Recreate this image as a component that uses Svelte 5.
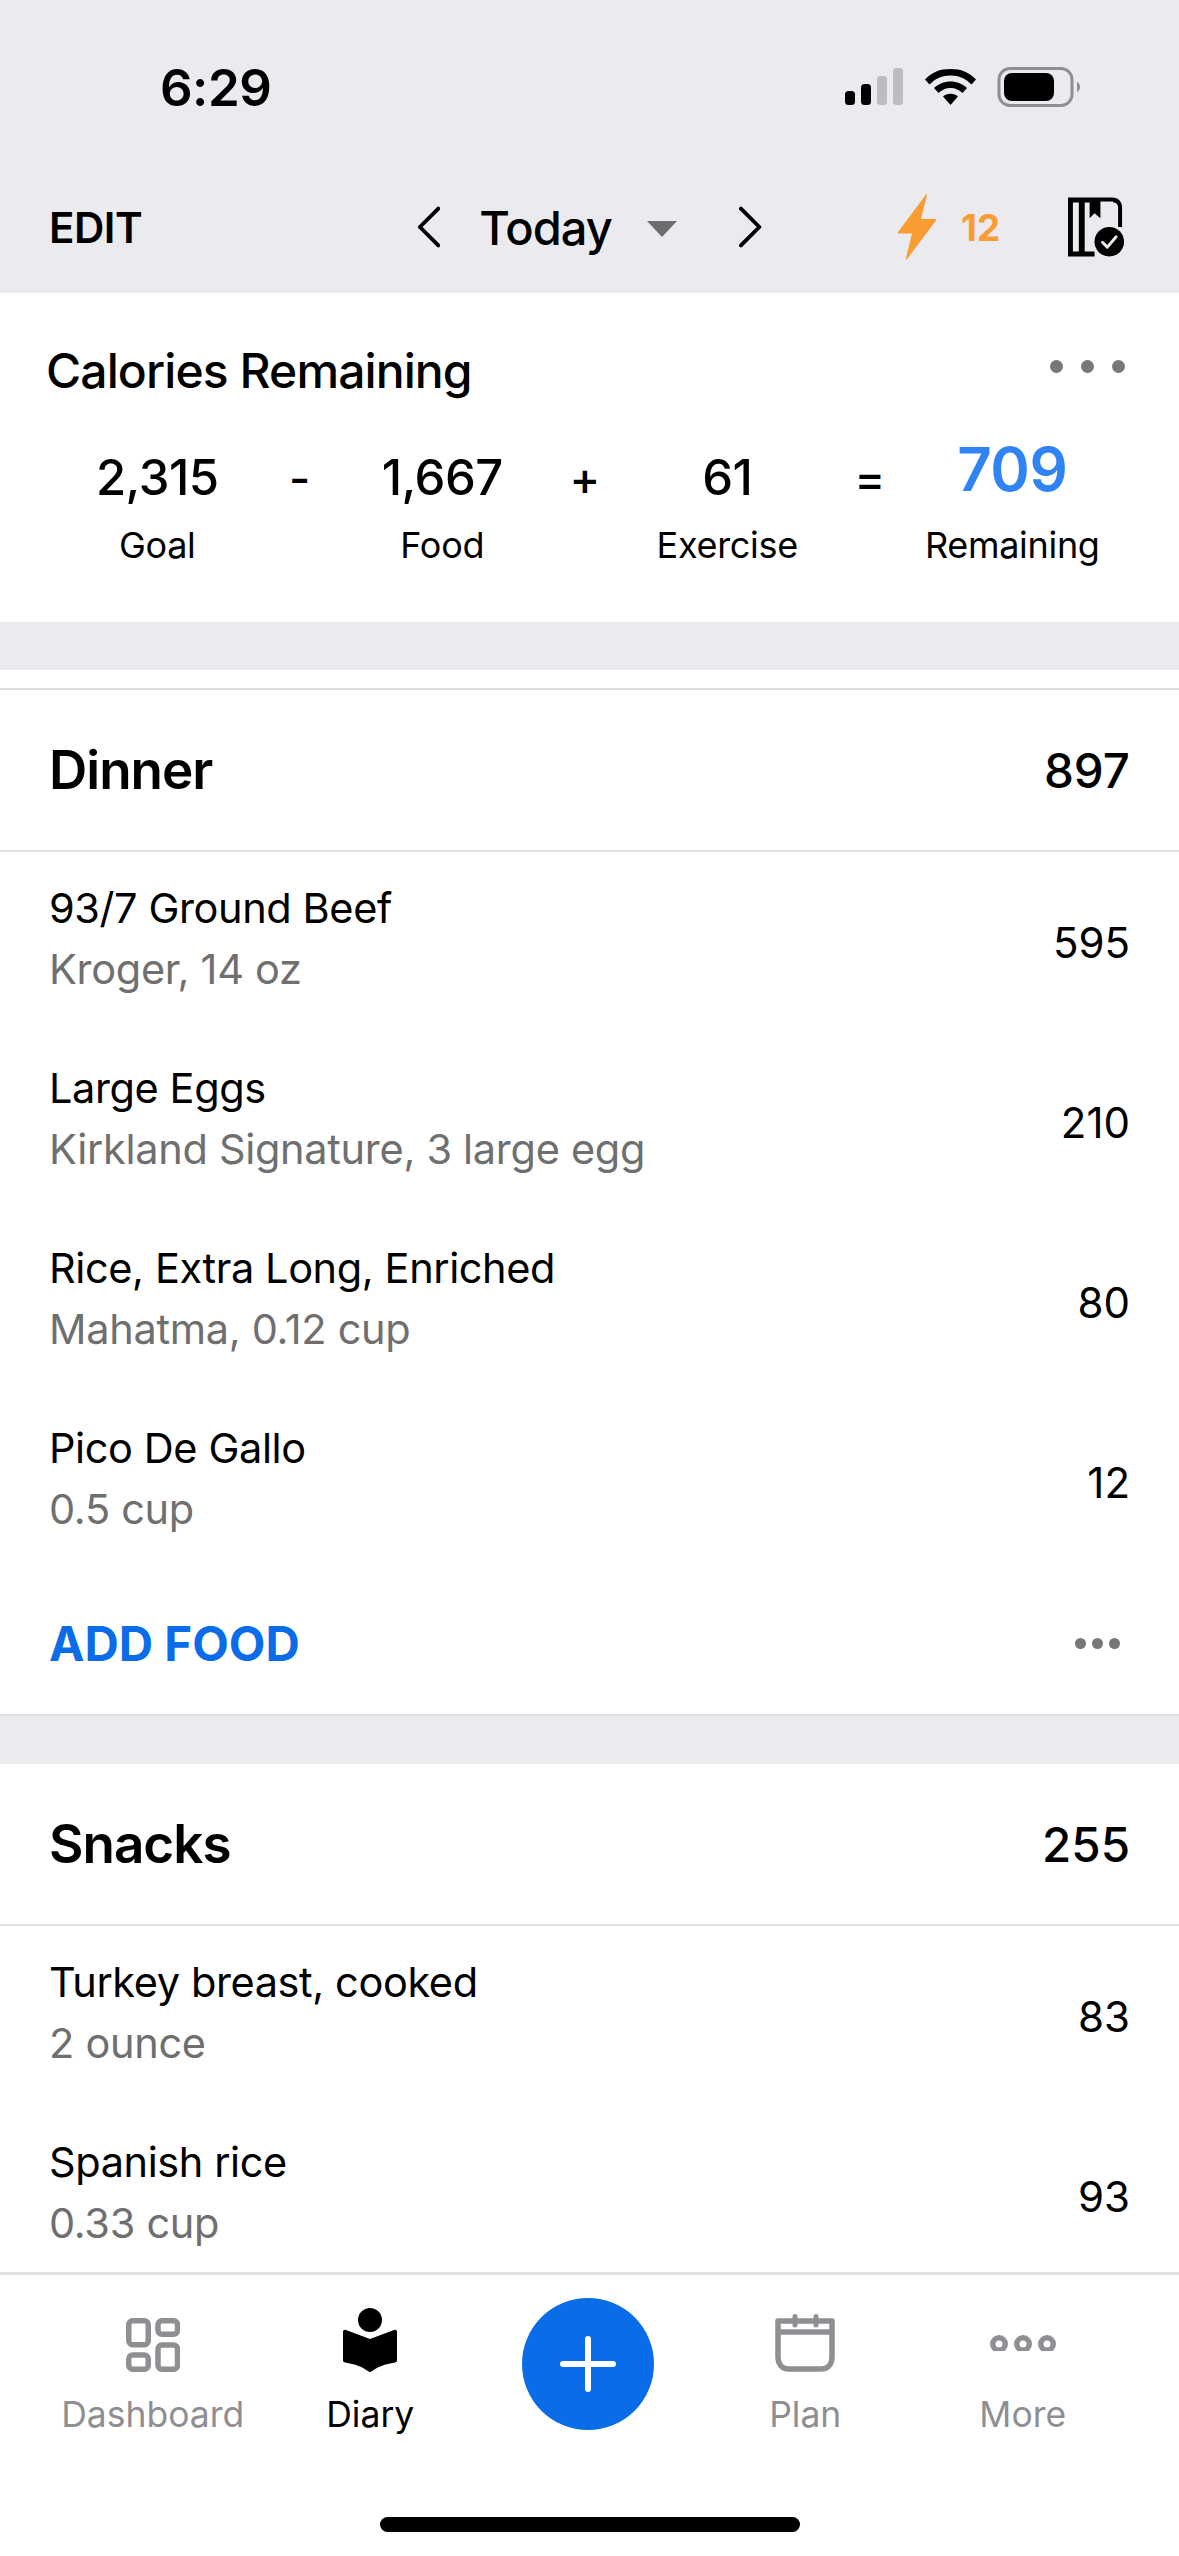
<script lang="ts">
	const stats = [
		{ value: '2,315', label: 'Goal' },
		{ op: '-' },
		{ value: '1,667', label: 'Food' },
		{ op: '+' },
		{ value: '61', label: 'Exercise' },
		{ op: '=' },
		{ value: '709', label: 'Remaining', highlight: true }
	];

	const meals = [
		{
			name: 'Dinner',
			total: 897,
			addFood: true,
			items: [
				{ name: '93/7 Ground Beef', detail: 'Kroger, 14 oz', cal: 595 },
				{ name: 'Large Eggs', detail: 'Kirkland Signature, 3 large egg', cal: 210 },
				{ name: 'Rice, Extra Long, Enriched', detail: 'Mahatma, 0.12 cup', cal: 80 },
				{ name: 'Pico De Gallo', detail: '0.5 cup', cal: 12 }
			]
		},
		{
			name: 'Snacks',
			total: 255,
			addFood: false,
			items: [
				{ name: 'Turkey breast, cooked', detail: '2 ounce', cal: 83 },
				{ name: 'Spanish rice', detail: '0.33 cup', cal: 93 }
			]
		}
	];
</script>

<div class="screen">
	<header class="top">
		<div class="status">
			<span class="time">6:29</span>
			<svg class="status-icons" width="240" height="40" viewBox="0 0 240 40">
				<rect x="0" y="24" width="10" height="14" rx="3.5" fill="#000" />
				<rect x="16" y="17" width="10" height="21" rx="3.5" fill="#000" />
				<rect x="32" y="9" width="10" height="29" rx="3.5" fill="#bcbcc2" />
				<rect x="48" y="1" width="10" height="37" rx="3.5" fill="#bcbcc2" />
				<path
					d="M80 12.5C87 5 95 2 105.5 2S124 5 131 12.5L126.500 17.500C120.500 11.500 114 8.500 105.500 8.500S90.500 11.500 84.500 17.500Z"
					fill="#000"
				/>
				<path
					d="M89 21C93.500 17 99 14.500 105.500 14.500S117.500 17 122 21L117.500 26C114.500 23 110.500 21 105.500 21S96.500 23 93.500 26Z"
					fill="#000"
				/>
				<path d="M98 29.500C100 27.800 102.500 26.800 105.500 26.800S111 27.800 113 29.500L105.500 38Z" fill="#000" />
				<rect x="154" y="1.500" width="73" height="37" rx="11" fill="none" stroke="#8e8e93" stroke-width="3" />
				<rect x="159" y="6" width="50" height="28" rx="8" fill="#000" />
				<path d="M232 15C236 16.500 236 23.500 232 25Z" fill="#8e8e93" />
			</svg>
		</div>
		<nav class="toolbar">
			<span class="edit">EDIT</span>
			<div class="date-nav">
				<svg width="24" height="42" viewBox="0 0 24 42">
					<path d="M22 2L3 21L22 40" fill="none" stroke="#000" stroke-width="4" stroke-linecap="round" stroke-linejoin="round" />
				</svg>
				<span class="today">Today</span>
				<span class="caret"></span>
				<svg width="24" height="42" viewBox="0 0 24 42">
					<path d="M2 2L21 21L2 40" fill="none" stroke="#000" stroke-width="4" stroke-linecap="round" stroke-linejoin="round" />
				</svg>
			</div>
			<div class="streak">
				<svg width="40" height="66" viewBox="0 0 40 66">
					<path
						d="M29 0.500L1 38C0.500 39 1 39.500 2 39.500H15L9 64C8.500 66 9.500 66 10.500 64.500L39 26.500C39.500 25.500 39 25 38 25H24L30 1C30.200 0 29.500 0 29 0.500Z"
						fill="#f99d33"
					/>
				</svg>
				<span class="streak-count">12</span>
			</div>
			<svg class="book" width="58" height="60" viewBox="0 0 58 60">
				<path
					d="M0 0H45C51 0 55 4 55 10V30H51V10C51 7 49 5 46 5V4H33V21L27 16L22 21V5H17V55H27V60H0ZM5 5V55H11V5Z"
					fill="#000"
					fill-rule="evenodd"
				/>
				<circle cx="42" cy="45" r="15" fill="#000" />
				<path d="M35 45.500L40 50.500L49 40" fill="none" stroke="#eaeaef" stroke-width="3" stroke-linecap="round" stroke-linejoin="round" />
			</svg>
		</nav>
	</header>

	<main class="content">
		<section class="summary">
			<div class="summary-head">
				<h2>Calories Remaining</h2>
				<div class="dots"><i></i><i></i><i></i></div>
			</div>
			<div class="stats">
				{#each stats as s}
					{#if s.op}
						<div class="op">{s.op}</div>
					{:else}
						<div class="stat">
							<div class="value" class:highlight={s.highlight}>{s.value}</div>
							<div class="label">{s.label}</div>
						</div>
					{/if}
				{/each}
			</div>
		</section>

		{#each meals as meal, i}
			<section class="meal" class:first={i === 0}>
				<div class="meal-head">
					<h3>{meal.name}</h3>
					<span>{meal.total}</span>
				</div>
				<ul>
					{#each meal.items as item}
						<li>
							<div class="text">
								<div class="food">{item.name}</div>
								<div class="detail">{item.detail}</div>
							</div>
							<span class="cal">{item.cal}</span>
						</li>
					{/each}
				</ul>
				{#if meal.addFood}
					<div class="add-row">
						<span class="add">ADD FOOD</span>
						<div class="small-dots"><i></i><i></i><i></i></div>
					</div>
				{/if}
			</section>
		{/each}
	</main>

	<footer class="tabbar">
		<div class="tabs">
			<div class="tab">
				<svg width="54" height="54" viewBox="0 0 54 54" fill="none" stroke="#8e8e93" stroke-width="5.500">
					<rect x="2.750" y="2.750" width="19.500" height="24" rx="4" />
					<rect x="32" y="2.750" width="19.500" height="13.500" rx="4" />
					<rect x="2.750" y="37" width="19.500" height="14.250" rx="4" />
					<rect x="32" y="27" width="19.500" height="24.250" rx="4" />
				</svg>
				<span>Dashboard</span>
			</div>
			<div class="tab active">
				<svg width="54" height="64" viewBox="0 0 54 64" fill="#000">
					<circle cx="27" cy="12" r="12" />
					<path
						d="M3 22L27 31L51 22C53 21.500 54 22.500 54 24V52C54 53.500 53.500 54 52 54.500C42 56 34 59 28.500 63.500C27.500 64 26.500 64 25.500 63.500C20 59 12 56 2 54.500C0.500 54 0 53.500 0 52V24C0 22.500 1 21.500 3 22Z"
					/>
				</svg>
				<span>Diary</span>
			</div>
			<div class="tab">
				<button class="plus" aria-label="Add">
					<svg width="56" height="56" viewBox="0 0 56 56">
						<path d="M28 3V53M3 28H53" stroke="#fff" stroke-width="6" stroke-linecap="round" />
					</svg>
				</button>
			</div>
			<div class="tab">
				<svg width="60" height="58" viewBox="0 0 60 58" fill="none" stroke="#8e8e93" stroke-width="5.500">
					<path d="M3 7H57V43C57 50 53 55 46 55H14C7 55 3 50 3 43Z" stroke-linejoin="round" />
					<path d="M3 18H57" />
					<path d="M20 2.500V11M41 2.500V11" stroke-width="5" stroke-linecap="round" />
				</svg>
				<span>Plan</span>
			</div>
			<div class="tab">
				<svg class="more" width="66" height="16" viewBox="0 0 66 16" fill="none" stroke="#8e8e93" stroke-width="5.500">
					<circle cx="9" cy="9" r="6.250" />
					<circle cx="33" cy="9" r="6.250" />
					<circle cx="57" cy="9" r="6.250" />
				</svg>
				<span>More</span>
			</div>
		</div>
		<div class="home"></div>
	</footer>
</div>

<style>
	:global(body) {
		margin: 0;
		background: #fff;
	}

	.screen {
		width: 1179px;
		height: 2556px;
		display: flex;
		flex-direction: column;
		overflow: hidden;
		background: #eaeaef;
		color: #000;
		font-family: Inter, 'Liberation Sans', sans-serif;
	}

	.top {
		height: 293px;
		flex: none;
		box-sizing: border-box;
		background: #eaeaef;
	}

	.status {
		display: flex;
		justify-content: space-between;
		align-items: center;
		height: 40px;
		padding: 67px 94px 0 160px;
	}

	.time {
		font-size: 51px;
		font-weight: 600;
		letter-spacing: -0.5px;
	}

	.toolbar {
		display: flex;
		align-items: center;
		height: 70px;
		margin-top: 85px;
		padding: 0 54px 0 49px;
	}

	.edit {
		font-size: 42px;
		font-weight: 600;
		width: 368px;
		flex: none;
		letter-spacing: -0.5px;
	}

	.date-nav {
		display: flex;
		align-items: center;
		width: 345px;
		flex: none;
	}

	.today {
		font-size: 47px;
		font-weight: 500;
		margin-left: 39px;
		letter-spacing: -1px;
	}

	.caret {
		width: 0;
		height: 0;
		border-left: 15px solid transparent;
		border-right: 15px solid transparent;
		border-top: 16px solid #6d6d6d;
		margin: 4px 62px 0 35px;
	}

	.streak {
		display: flex;
		align-items: center;
		gap: 24px;
		margin-left: 135px;
		width: 171px;
		flex: none;
	}

	.streak-count {
		font-size: 37px;
		font-weight: 700;
		color: #f99d33;
	}

	.content {
		flex: 1;
		min-height: 0;
		overflow: hidden;
	}

	.summary {
		background: #fff;
		height: 329px;
		box-sizing: border-box;
		padding-top: 48px;
		margin-bottom: 48px;
	}

	.summary-head {
		display: flex;
		justify-content: space-between;
		align-items: center;
		padding: 0 54px 0 46px;
	}

	h2 {
		margin: 0;
		font-size: 48px;
		font-weight: 500;
		letter-spacing: -0.9px;
	}

	.dots {
		display: flex;
		gap: 18px;
		margin-top: -8px;
	}

	.dots i {
		width: 13px;
		height: 13px;
		border-radius: 50%;
		background: #777;
	}

	.stats {
		display: grid;
		grid-template-columns: repeat(7, 142.5px);
		padding: 34px 0 0 86px;
		margin-top: 16px;
	}

	.stat {
		text-align: center;
		white-space: nowrap;
		display: flex;
		flex-direction: column;
		align-items: center;
	}

	.value {
		font-size: 49px;
		font-weight: 500;
		line-height: 56px;
		height: 56px;
		letter-spacing: -0.5px;
	}

	.value.highlight {
		font-size: 60px;
		font-weight: 600;
		color: #2f83f2;
		margin-top: -13px;
		height: 69px;
		line-height: 64px;
	}

	.label {
		font-size: 36px;
		line-height: 44px;
		margin-top: 17px;
		letter-spacing: -0.3px;
	}

	.op {
		text-align: center;
		font-size: 46px;
		line-height: 56px;
		font-weight: 500;
	}

	.meal {
		background: #fff;
		border-bottom: 2px solid #ddd;
		margin-bottom: 48px;
	}

	.meal.first {
		padding-top: 18px;
	}

	.meal.first .meal-head {
		border-top: 2px solid #dcdcdc;
	}

	.meal-head {
		display: flex;
		justify-content: space-between;
		align-items: center;
		height: 160px;
		padding: 0 49px;
		border-bottom: 2px solid #e2e2e2;
	}

	h3 {
		margin: 0;
		font-size: 53px;
		font-weight: 600;
		letter-spacing: -1px;
	}

	.meal-head span {
		font-size: 47.500px;
		font-weight: 500;
	}

	ul {
		list-style: none;
		margin: 0;
		padding: 0;
	}

	li {
		display: flex;
		justify-content: space-between;
		align-items: center;
		height: 180px;
		padding: 0 49px;
	}

	.text {
		margin-bottom: 8px;
	}

	.food {
		font-size: 41.500px;
		line-height: 61px;
		letter-spacing: -0.4px;
	}

	.detail {
		font-size: 41.500px;
		line-height: 60px;
		color: #6f6f6f;
		letter-spacing: -0.3px;
	}

	.cal {
		font-size: 42px;
	}

	.add-row {
		display: flex;
		justify-content: space-between;
		align-items: center;
		height: 142px;
		padding: 0 59px 0 49px;
	}

	.add {
		font-size: 47.500px;
		font-weight: 700;
		color: #0a6ce8;
	}

	.small-dots {
		display: flex;
		gap: 6px;
	}

	.small-dots i {
		width: 11px;
		height: 11px;
		border-radius: 50%;
		background: #777;
	}

	.tabbar {
		height: 284px;
		flex: none;
		box-sizing: border-box;
		background: #fff;
		border-top: 3px solid #e4e4e4;
		position: relative;
	}

	.tabs {
		display: grid;
		grid-template-columns: repeat(5, 217.5px);
		padding: 0 0 0 44px;
		height: 161px;
	}

	.tab {
		display: flex;
		flex-direction: column;
		align-items: center;
		justify-content: flex-end;
		gap: 22px;
		font-size: 35.500px;
		color: #8e8e93;
		white-space: nowrap;
	}

	.tab.active {
		color: #000;
	}

	.tab span {
		line-height: 42px;
	}

	.more {
		margin-bottom: 21px;
	}

	.plus {
		width: 132px;
		height: 132px;
		border: none;
		border-radius: 50%;
		background: #0a6ce8;
		display: flex;
		align-items: center;
		justify-content: center;
		padding: 0;
		margin-bottom: 6px;
	}

	.home {
		position: absolute;
		left: 380px;
		top: 242px;
		width: 420px;
		height: 15px;
		border-radius: 8px;
		background: #000;
	}
</style>
